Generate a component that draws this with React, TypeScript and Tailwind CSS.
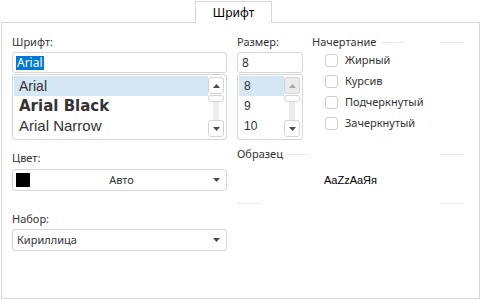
import React from "react";

const ui = { fontFamily: '"Noto Sans", "Liberation Sans", sans-serif' };
const arial = { fontFamily: '"Liberation Sans", Arial, sans-serif' };

function Arrow({ up, muted }: { up?: boolean; muted?: boolean }) {
    return (
        <svg width="7" height="4" viewBox="0 0 7 4" className={up ? "" : "rotate-180"}>
            <path d="M0 4 L3.5 0 L7 4 Z" fill={muted ? "#a8a8a8" : "#4a4a4a"} />
        </svg>
    );
}

function ScrollBar({ disabledUp }: { disabledUp?: boolean }) {
    return (
        <div className="flex flex-col items-center w-[16px] h-full py-px">
            <div
                className={`w-[16px] h-[17px] rounded-[3px] border border-[#d4d4d4] flex items-center justify-center ${disabledUp ? "bg-[#ebebeb]" : "bg-white"}`}
            >
                <Arrow up muted={disabledUp} />
            </div>
            <div className="w-[16px] h-[7px] mt-px rounded-[3px] border border-[#d4d4d4] bg-white" />
            <div className="w-[6px] flex-1 bg-[#ececec]" />
            <div className="w-[16px] h-[17px] rounded-[3px] border border-[#d4d4d4] bg-white flex items-center justify-center">
                <Arrow />
            </div>
        </div>
    );
}

function Check({ label }: { label: string }) {
    return (
        <div className="flex items-center h-[21px]">
            <div className="w-[13px] h-[13px] rounded-[3px] border border-[#cfcfcf] bg-white" />
            <span className="ml-[7px] text-[11px] text-[#333]">{label}</span>
        </div>
    );
}

// заголовок группы с прерывистой линией
function GroupLine({ title, width, gap }: { title: string; width: number; gap: number }) {
    return (
        <div className="flex items-center h-[14px]">
            <span className="text-[11px] text-[#333] leading-[14px] whitespace-nowrap" style={{ width }}>
                {title}
            </span>
            <div className="h-px w-[24px] bg-[#ececec]" />
            <div className="h-px w-[24px] bg-[#ececec]" style={{ marginLeft: gap }} />
        </div>
    );
}

export default function App() {
    const fonts = [
        { name: "Arial", cls: "text-[14px]", style: arial },
        { name: "Arial Black", cls: "text-[15px] font-bold", style: { fontFamily: '"DejaVu Sans", sans-serif' } },
        { name: "Arial Narrow", cls: "text-[15px]", style: { fontFamily: '"Liberation Sans Narrow", "Liberation Sans", sans-serif' } },
    ];

    return (
        <div className="w-[481px] h-[300px] bg-white relative" style={ui}>
            {/* вкладка */}
            <div className="flex h-[22px] relative z-10">
                <div className="ml-[195px] mt-px w-[77px] h-[22px] border border-b-0 border-[#d8d8d8] bg-white flex items-center justify-center text-[12px] text-black">
                    Шрифт
                </div>
            </div>

            <div className="ml-px w-[479px] h-[277px] border border-[#d8d8d8] flex pl-[10px] pt-[12px]">
                {/* левая колонка */}
                <div className="w-[215px] flex flex-col">
                    <div className="text-[11px] leading-[14px] text-[#333]">Шрифт:</div>
                    <div className="mt-[3px] h-[21px] rounded-[3px] border border-[#d6d6d6] flex items-center pl-[3px]">
                        <span className="bg-[#0078d7] text-white text-[12px] leading-[14px] px-px">Arial</span>
                    </div>
                    <div className="mt-px h-[66px] rounded-[3px] border border-[#d6d6d6] flex p-px pr-[2px]">
                        <div className="flex-1 flex flex-col">
                            {fonts.map((f, i) => (
                                <div
                                    key={f.name}
                                    className={`h-[20px] flex items-center pl-[5px] text-[#333] ${f.cls} ${i === 0 ? "bg-[#d5e6f5]" : ""}`}
                                    style={f.style}
                                >
                                    {f.name}
                                </div>
                            ))}
                        </div>
                        <ScrollBar />
                    </div>

                    <div className="mt-[11px] text-[11px] leading-[14px] text-[#333]">Цвет:</div>
                    <div className="mt-[4px] h-[22px] rounded-[3px] border border-[#d6d6d6] flex items-center pl-[3px] pr-[6px]">
                        <div className="w-[14px] h-[14px] bg-black" />
                        <span className="flex-1 text-center text-[11px] text-[#333]">Авто</span>
                        <Arrow />
                    </div>

                    <div className="mt-[21px] text-[11px] leading-[14px] text-[#333]">Набор:</div>
                    <div className="mt-[3px] h-[22px] rounded-[3px] border border-[#d6d6d6] flex items-center pl-[4px] pr-[6px]">
                        <span className="flex-1 text-[11px] text-[#333]">Кириллица</span>
                        <Arrow />
                    </div>
                </div>

                {/* правая часть */}
                <div className="ml-[10px] flex flex-col">
                    <div className="flex">
                        <div className="w-[66px] flex flex-col">
                            <div className="text-[11px] leading-[14px] text-[#333]">Размер:</div>
                            <div className="mt-[3px] h-[21px] rounded-[3px] border border-[#d6d6d6] flex items-center pl-[4px] text-[12px] text-[#333]">
                                8
                            </div>
                            <div className="mt-px h-[66px] rounded-[3px] border border-[#d6d6d6] flex p-px pr-[2px]">
                                <div className="flex-1 flex flex-col text-[12px] text-[#333]" style={arial}>
                                    {["8", "9", "10"].map((s, i) => (
                                        <div key={s} className={`h-[20px] flex items-center pl-[5px] ${i === 0 ? "bg-[#d5e6f5]" : ""}`}>
                                            {s}
                                        </div>
                                    ))}
                                </div>
                                <ScrollBar disabledUp />
                            </div>
                        </div>

                        <div className="ml-[9px] flex flex-col">
                            <GroupLine title="Начертание" width={68} gap={36} />
                            <div className="mt-[1px] pl-[13px] flex flex-col">
                                <Check label="Жирный" />
                                <Check label="Курсив" />
                                <Check label="Подчеркнутый" />
                                <Check label="Зачеркнутый" />
                            </div>
                        </div>
                    </div>

                    <div className="mt-[7px]">
                        <GroupLine title="Образец" width={49} gap={130} />
                        <div className="h-[38px] flex items-center justify-center text-[11px] text-black" style={arial}>
                            AaZzAaЯя
                        </div>
                        <div className="flex mt-[4px]">
                            <div className="h-px w-[25px] bg-[#ececec]" />
                            <div className="h-px w-[24px] bg-[#ececec] ml-[178px]" />
                        </div>
                    </div>
                </div>
            </div>
        </div>
    );
}
